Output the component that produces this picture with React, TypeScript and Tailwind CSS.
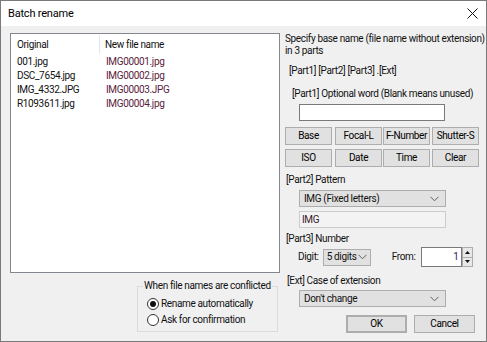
import React from "react";

const Chevron = () => (
  <svg width="9" height="6" viewBox="0 0 9 6" className="shrink-0">
    <path d="M0.5 0.8 L4.5 4.8 L8.5 0.8" fill="none" stroke="#606060" strokeWidth="1" />
  </svg>
);

const Btn = ({ label, cls = "" }: { label: string; cls?: string }) => (
  <div className={`flex items-center justify-center bg-[#e1e1e1] border border-[#adadad] h-[18px] text-black whitespace-nowrap ${cls}`}>
    {label}
  </div>
);

const Radio = ({ checked, label }: { checked: boolean; label: string }) => (
  <div className="flex items-center h-[16px]">
    <div className="w-[12px] h-[12px] rounded-full border border-[#333] bg-white flex items-center justify-center ml-[9px]">
      {checked && <div className="w-[6px] h-[6px] rounded-full bg-[#111]" />}
    </div>
    <span className="ml-[2px] whitespace-nowrap">{label}</span>
  </div>
);

export default function App() {
  const rows = [
    ["001.jpg", "IMG00001.jpg"],
    ["DSC_7654.jpg", "IMG00002.jpg"],
    ["IMG_4332.JPG", "IMG00003.JPG"],
    ["R1093611.jpg", "IMG00004.jpg"],
  ];
  return (
    <div
      className="w-[487px] h-[342px] border border-[#7a7a7a] bg-[#f0f0f0] flex flex-col text-[10px] tracking-[-0.35px] text-[#111] leading-[12px] overflow-hidden"
      style={{ fontFamily: 'Roboto, sans-serif' }}
    >
      {/* title bar */}
      <div className="h-[25px] bg-white flex items-center justify-between pl-[7px] pr-[8px] shrink-0">
        <span className="text-[11px] tracking-[-0.2px] text-black">Batch rename</span>
        <svg width="11" height="11" viewBox="0 0 11 11">
          <path d="M0.5 0.5 L10.5 10.5 M10.5 0.5 L0.5 10.5" stroke="#111" strokeWidth="1" />
        </svg>
      </div>
      {/* body */}
      <div className="flex flex-row flex-1">
        {/* left */}
        <div className="pl-[9px] pt-[7px] flex flex-col w-[279px] shrink-0">
          <div className="w-[270px] h-[240px] border border-[#828790] bg-white">
            <div className="flex h-[21px] items-center">
              <div className="w-[89px] pl-[6px] h-[19px] flex items-center border-r border-[#e5e5e5]">Original</div>
              <div className="pl-[5px]">New file name</div>
            </div>
            {rows.map(([a, b]) => (
              <div key={a} className="flex h-[14px] items-center">
                <div className="w-[89px] pl-[6px]">{a}</div>
                <div className="pl-[6px] text-[#5a1c3c]">{b}</div>
              </div>
            ))}
          </div>
          <fieldset className="ml-[127px] mt-[7px] w-[141px] min-w-0 h-[52px] border border-[#dcdcdc] px-0">
            <legend className="ml-[5px] px-[1px] whitespace-nowrap">When file names are conflicted</legend>
            <div className="mt-[4px]">
              <Radio checked label="Rename automatically" />
              <Radio checked={false} label="Ask for confirmation" />
            </div>
          </fieldset>
        </div>
        {/* right */}
        <div className="ml-[5px] pt-[7px] flex flex-col w-[200px] shrink-0 whitespace-nowrap">
          <div className="leading-[11.5px] h-[24px]">
            Specify base name (file name without extension)
            <br />
            in 3 parts
          </div>
          <div className="ml-[4px] mt-[8px] h-[12px]">[Part1] [Part2] [Part3] .[Ext]</div>
          <div className="ml-[7px] mt-[11px] h-[12px]">[Part1] Optional word (Blank means unused)</div>
          <div className="ml-[14px] mt-[4px] w-[146px] h-[17px] bg-white border border-[#7a7a7a]" />
          <div className="grid grid-cols-[47px_47px_47px_47px] gap-x-[2px] gap-y-[4px] mt-[6px]">
            <Btn label="Base" />
            <Btn label="Focal-L" cls="ml-[1px] -mr-[1px]" />
            <Btn label="F-Number" />
            <Btn label="Shutter-S" />
            <Btn label="ISO" />
            <Btn label="Date" cls="ml-[1px] -mr-[1px]" />
            <Btn label="Time" />
            <Btn label="Clear" />
          </div>
          <div className="ml-[1px] mt-[7px] h-[12px]">[Part2] Pattern</div>
          <div className="ml-[14px] mt-[4px] w-[147px] h-[17px] bg-[#e1e1e1] border border-[#adadad] flex items-center justify-between pl-[4px] pr-[6px]">
            <span>IMG (Fixed letters)</span>
            <Chevron />
          </div>
          <div className="ml-[14px] mt-[4px] w-[147px] h-[17px] bg-[#f3f3f3] border border-[#cccccc] flex items-center pl-[2px] text-[#3a1a2a]">
            IMG
          </div>
          <div className="ml-[1px] mt-[5px] h-[12px]">[Part3] Number</div>
          <div className="flex items-center mt-[2px] h-[20px]">
            <span className="ml-[13px]">Digit:</span>
            <div className="ml-[4px] w-[48px] h-[17px] bg-[#e1e1e1] border border-[#adadad] flex items-center justify-between pl-[3px] pr-[3px]">
              <span className="overflow-hidden whitespace-nowrap w-[31px]">5 digits</span>
              <Chevron />
            </div>
            <span className="ml-[21px]">From:</span>
            <div className="ml-[6px] w-[41px] h-[20px] bg-white border border-[#7a7a7a] flex items-center justify-end pr-[3px] text-[#3a1a5a]">
              1
            </div>
            <div className="w-[11px] h-[20px] flex flex-col">
              <div className="flex-1 bg-[#e8e8e8] border border-[#adadad] flex items-center justify-center">
                <svg width="5" height="3" viewBox="0 0 5 3"><path d="M0 3 L2.5 0 L5 3 Z" fill="#111" /></svg>
              </div>
              <div className="flex-1 bg-[#e8e8e8] border border-t-0 border-[#adadad] flex items-center justify-center">
                <svg width="5" height="3" viewBox="0 0 5 3"><path d="M0 0 L2.5 3 L5 0 Z" fill="#111" /></svg>
              </div>
            </div>
          </div>
          <div className="ml-[2px] mt-[8px] h-[12px]">[Ext] Case of extension</div>
          <div className="ml-[14px] mt-[3px] w-[147px] h-[17px] bg-[#e1e1e1] border border-[#adadad] flex items-center justify-between pl-[4px] pr-[6px]">
            <span>Don't change</span>
            <Chevron />
          </div>
          <div className="flex mt-[8px] ml-[61px]">
            <Btn label="OK" cls="w-[61px] h-[18px] border-2 border-[#0078d7]" />
            <Btn label="Cancel" cls="w-[61px] h-[18px] ml-[7px]" />
          </div>
        </div>
      </div>
    </div>
  );
}
